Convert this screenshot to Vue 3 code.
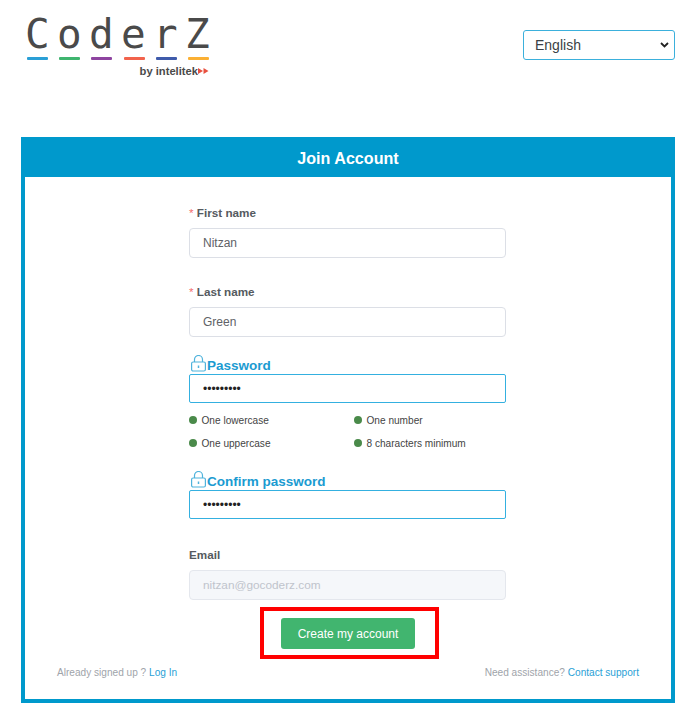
<template>
  <div class="page">
    <header class="top">
      <div class="logo">
        <div class="logo-word">CoderZ</div>
        <div class="logo-bars">
          <span v-for="c in barColors" :key="c" class="logo-bar" :style="{ background: c }"></span>
        </div>
        <div class="logo-by">
          <span class="logo-by-text">by intelitek</span>
          <svg class="logo-arrows" width="11" height="6" viewBox="0 0 11 6">
            <path d="M0 0l5 3L0 6zM5.500 0l5 3-5 3z" fill="#e8503f" />
          </svg>
        </div>
      </div>
      <div class="lang-wrap">
        <select class="lang">
          <option>English</option>
        </select>
        <svg class="lang-chevron" width="9" height="6" viewBox="0 0 9 6" fill="none" stroke="#222" stroke-width="1.800">
          <path d="M1 1l3.500 3.500L8 1" />
        </svg>
      </div>
    </header>

    <main class="card">
      <h1 class="card-title">Join Account</h1>
      <div class="card-body">
        <form class="form" @submit.prevent>
          <div class="field field-name">
            <label class="label"><span class="req">*</span> First name</label>
            <input class="input" value="Nitzan" />
          </div>
          <div class="field field-last">
            <label class="label"><span class="req">*</span> Last name</label>
            <input class="input" value="Green" />
          </div>

          <div class="field field-pass">
            <label class="label-focus">
              <svg class="lock" width="17" height="17" viewBox="0 0 17 17" fill="none" stroke="#4fb3dc" stroke-width="1.200">
                <rect x="1.600" y="7" width="13.800" height="9" rx="1.500" />
                <path d="M4.500 7V4.500a4 4 0 0 1 8 0V7" />
                <path d="M8.500 10.500v2.500" stroke-width="1.500" />
              </svg>
              Password
            </label>
            <input class="input input-focus" type="password" value="123456789" />
          </div>
          <ul class="rules">
            <li v-for="r in rules" :key="r" class="rule"><span class="dot"></span>{{ r }}</li>
          </ul>

          <div class="field field-confirm">
            <label class="label-focus">
              <svg class="lock" width="17" height="17" viewBox="0 0 17 17" fill="none" stroke="#4fb3dc" stroke-width="1.200">
                <rect x="1.600" y="7" width="13.800" height="9" rx="1.500" />
                <path d="M4.500 7V4.500a4 4 0 0 1 8 0V7" />
                <path d="M8.500 10.500v2.500" stroke-width="1.500" />
              </svg>
              Confirm password
            </label>
            <input class="input input-focus" type="password" value="123456789" />
          </div>

          <div class="field field-email">
            <label class="label">Email</label>
            <input class="input input-disabled" value="nitzan@gocoderz.com" disabled />
          </div>

          <div class="highlight">
            <button class="submit" type="submit">Create my account</button>
          </div>
        </form>

        <footer class="foot">
          <span>Already signed up ? <a class="link">Log In</a></span>
          <span>Need assistance? <a class="link">Contact support</a></span>
        </footer>
      </div>
    </main>
  </div>
</template>

<script setup>
const barColors = ['#2a9fd6', '#3fb56f', '#8e44a0', '#f2634c', '#3f5bab', '#fbb034']
const rules = ['One lowercase', 'One number', 'One uppercase', '8 characters minimum']
</script>

<style>
html, body { margin: 0; background: #fff; }
</style>

<style scoped>
.page { width: 699px; height: 720px; box-sizing: border-box; padding: 0 24px 0 21px; font-family: "Liberation Sans", Arial, sans-serif; overflow: hidden; }
.top { display: flex; justify-content: space-between; align-items: flex-start; height: 137px; }

.logo { padding: 11px 0 0 6px; width: 182px; }
.logo-word { font-family: "DejaVu Sans Mono", monospace; font-size: 41px; line-height: 46px; letter-spacing: 7.300px; color: #4a4a4a; margin-left: -2px; white-space: nowrap; }
.logo-bars { display: flex; justify-content: space-between; }
.logo-bar { width: 21px; height: 3px; border-radius: 1px; }
.logo-by { display: flex; justify-content: flex-end; align-items: center; margin-top: 4px; }
.logo-by-text { font-size: 11.200px; font-weight: 700; color: #4a4a4a; line-height: 14px; }

.lang-wrap { position: relative; margin-top: 30px; }
.lang { display: block; appearance: none; width: 152px; height: 30px; box-sizing: border-box; padding: 0 7px 0 11px; border: 1px solid #3bb0dc; border-radius: 3px; background: #fff; font: 14px "Liberation Sans", Arial, sans-serif; color: #3a3f45; }
.lang-chevron { position: absolute; right: 6px; top: 12px; pointer-events: none; }

.card { box-sizing: border-box; height: 566px; border: 4px solid #0099cc; border-top: 0; display: flex; flex-direction: column; }
.card-title { margin: 0 -4px; height: 40px; background: #0099cc; color: #fff; font-size: 16.100px; font-weight: 700; line-height: 43px; text-align: center; }
.card-body { flex: 1; display: flex; flex-direction: column; }

.form { width: 317px; margin-left: 164px; }
.field { display: flex; flex-direction: column; }
.field-name { padding-top: 29px; }
.field-last { padding-top: 27px; }
.field-pass { padding-top: 17px; }
.field-confirm { padding-top: 15px; }
.field-email { padding-top: 29px; }

.label { font-size: 11.700px; font-weight: 700; line-height: 14px; color: #555a60; margin-bottom: 8px; }
.req { color: #f56c6c; font-weight: 400; }
.label-focus { display: flex; align-items: flex-end; height: 20px; font-size: 13.500px; font-weight: 700; line-height: 17px; color: #1b9bd1; }
.lock { margin: 0 0 2px 1px; flex: none; }

.input { box-sizing: border-box; width: 317px; height: 30px; padding: 0 13px; border: 1px solid #dcdfe6; border-radius: 4px; background: #fff; font: 12px "Liberation Sans", Arial, sans-serif; color: #606266; outline: none; }
.input-focus { height: 29px; border: 1.500px solid #34b0e0; border-radius: 2px; color: #222; }
.input-disabled { background: #f5f7fa; border-color: #e4e7ed; color: #c0c4cc; font-size: 11.800px; }

.rules { list-style: none; margin: 6px 0 0; padding: 0; display: grid; grid-template-columns: 165px 1fr; grid-auto-rows: 23px; }
.rule { display: flex; align-items: center; font-size: 10.100px; color: #444; }
.dot { width: 8px; height: 8px; border-radius: 50%; background: #4a8a4a; margin-right: 4.500px; flex: none; position: relative; top: -1px; }

.highlight { box-sizing: border-box; width: 179px; height: 52px; margin: 7px 0 0 71px; padding-left: 17px; border: 4px solid #f00; display: flex; align-items: center; }
.submit { width: 134px; height: 31px; padding: 1px 0 0; border: 0; border-radius: 3px; background: #41b56f; color: #fff; font: 12px "Liberation Sans", Arial, sans-serif; cursor: pointer; }

.foot { display: flex; justify-content: space-between; padding: 8px 32px 0; font-size: 10.100px; line-height: 12px; color: #a0a4aa; }
.link { color: #2a9fd6; }
</style>
